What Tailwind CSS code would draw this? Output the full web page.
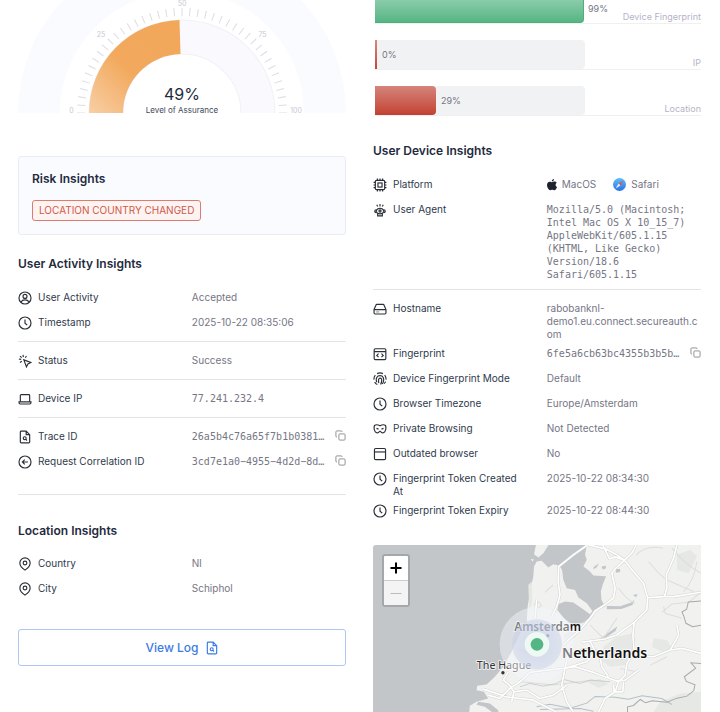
<!DOCTYPE html>
<html lang="en">
<head>
<meta charset="utf-8">
<meta name="viewport" content="width=device-width, initial-scale=1">
<title>Assurance Insights</title>
<script src="https://cdn.jsdelivr.net/npm/@tailwindcss/browser@4"></script>
</head>
<body class="bg-white font-['Inter',sans-serif] text-[10px] leading-[13px] text-[#2f3a4c]">
<svg class="hidden" aria-hidden="true">
  <defs>
    <symbol id="i-user" viewBox="0 0 24 24"><circle cx="12" cy="12" r="10.3"/><circle cx="12" cy="9.3" r="3.4"/><path d="M5.2 19c1.3-2.700 3.900-3.700 6.800-3.700s5.500 1 6.800 3.700"/></symbol>
    <symbol id="i-clock" viewBox="0 0 24 24"><circle cx="12" cy="12" r="10.300"/><path d="M12 6v6.300l3.800 3.400"/></symbol>
    <symbol id="i-click" viewBox="0 0 24 24"><path d="M10 10l12 4.500-5 2.500-2.500 5z"/><path d="M8.500 1.500l.8 4M1.500 8.500l4 .8M3.500 3.500l2.800 2.800M14.500 3.500l-2 3M3.500 14.500l3-2"/></symbol>
    <symbol id="i-laptop" viewBox="0 0 24 24"><path d="M4 16V6a1.500 1.500 0 0 1 1.500-1.500h13A1.500 1.500 0 0 1 20 6v10M1.800 17h20.400v1.500a2 2 0 0 1-2 2H3.800a2 2 0 0 1-2-2z"/></symbol>
    <symbol id="i-file" viewBox="0 0 24 24"><path d="M14 2H5.500A1.500 1.500 0 0 0 4 3.500v17A1.500 1.500 0 0 0 5.500 22h13a1.500 1.500 0 0 0 1.500-1.500V8zM14 2v6h6"/><circle cx="11.500" cy="14" r="2.500"/><path d="M13.500 16l2 2"/></symbol>
    <symbol id="i-back" viewBox="0 0 24 24"><circle cx="12" cy="12" r="10.300"/><path d="M17 12H7.500M11.500 8l-4 4 4 4"/></symbol>
    <symbol id="i-pin" viewBox="0 0 24 24"><path d="M12 22.500c-3-2-8.800-6.800-8.800-12.300a8.800 8.800 0 0 1 17.600 0c0 5.500-5.800 10.300-8.800 12.300z"/><circle cx="12" cy="10.200" r="3.200"/></symbol>
    <symbol id="i-copy" viewBox="0 0 24 24"><rect x="8.500" y="8.500" width="13.500" height="13.500" rx="2"/><path d="M4.500 15.500H4a2 2 0 0 1-2-2V4a2 2 0 0 1 2-2h9.500a2 2 0 0 1 2 2v.5"/></symbol>
    <symbol id="i-chip" viewBox="0 0 24 24"><rect x="4" y="4" width="16" height="16" rx="2"/><rect x="8.500" y="8.500" width="7" height="7"/><path d="M7.500 1v3M12 1v3M16.500 1v3M7.500 20v3M12 20v3M16.500 20v3M1 7.500h3M1 12h3M1 16.500h3M20 7.500h3M20 12h3M20 16.500h3"/></symbol>
    <symbol id="i-agent" viewBox="0 0 24 24"><path d="M5 14c1.500-3.500 4-5 7-5s5.500 1.500 7 5c-1.500 3-4 4.500-7 4.500S6.500 17 5 14z"/><circle cx="12" cy="13.700" r="1.800"/><path d="M5.500 11.500c-2 0-2.500 1-2.500 2.500s.5 2.500 2.500 2.500M18.500 11.500c2 0 2.500 1 2.500 2.500s-.5 2.500-2.500 2.500M8 18v4h8v-4M12 1.500V6M6.500 3L8 6M17.500 3L16 6"/></symbol>
    <symbol id="i-drive" viewBox="0 0 24 24"><path d="M1.800 13L5 5.500A2 2 0 0 1 6.800 4h10.400A2 2 0 0 1 19 5.500l3.200 7.500v5.500a2 2 0 0 1-2 2H3.800a2 2 0 0 1-2-2zM1.800 13h20.400"/><path d="M5.500 17h5" stroke-opacity=".5"/></symbol>
    <symbol id="i-code" viewBox="0 0 24 24"><rect x="2" y="3" width="20" height="18.500" rx="2"/><path d="M2 8h20M9.500 11.500l-3 3 3 3M14.500 11.500l3 3-3 3"/></symbol>
    <symbol id="i-finger" viewBox="0 0 24 24"><path d="M7 2.800a10.300 10.300 0 0 1 10 0M20 5.500A10.300 10.300 0 0 1 22.300 13M21.500 16.500a10.500 10.500 0 0 1-2.500 3.500M4 5.500A10.300 10.300 0 0 0 1.700 13M2.800 17a10.300 10.300 0 0 0 4.700 4.500M6.500 17.500C5.500 15 5 12 6.500 9.300c2.200-4.100 8.800-4.100 11 0 1.300 3 .8 7.500-1.500 11.200M10 19c-.5-2-.7-4.500-.3-6.500.6-2.500 4.700-2.500 5.100 0 .3 3-.3 6-1.800 9"/></symbol>
    <symbol id="i-mask" viewBox="0 0 24 24"><path d="M2.500 6C5 4 8.500 4.500 12 6.500 15.500 4.500 19 4 21.500 6c1 3.500.6 8-1.500 11-2 2.300-4.500 1.800-6 .3l-2-1.500-2 1.500c-1.500 1.500-4 2-6-.3C1.900 14 1.500 9.500 2.500 6z"/><path d="M6 11l3.500 1.200M18 11l-3.500 1.200"/></symbol>
    <symbol id="i-window" viewBox="0 0 24 24"><rect x="2.500" y="2.500" width="19" height="19" rx="2"/><path d="M2.500 8.500h19"/></symbol>
  </defs>
</svg>

<main class="grid grid-cols-2 gap-[27px] pl-[18px] pr-[19px]">
  <div class="min-w-0">
    <svg class="block w-full" viewBox="0 0 328 114" role="img" aria-label="Level of Assurance 49%">
      <defs>
        <linearGradient id="g-orange" x1="0" y1="1" x2="1" y2="0"><stop offset="0" stop-color="#f8cfa5"/><stop offset=".45" stop-color="#f2a95d"/><stop offset="1" stop-color="#f2a75a"/></linearGradient>
        <clipPath id="g-clip"><rect width="328" height="113"/></clipPath>
      </defs>
      <g clip-path="url(#g-clip)">
        <circle cx="164" cy="113" r="143" fill="none" stroke="#fafbfe" stroke-width="42"/>
        <circle cx="164" cy="113" r="76" fill="none" stroke="#f0f0f8" stroke-width="35"/>
        <circle cx="164" cy="113" r="76" fill="none" stroke="#f9f9fe" stroke-width="33"/>
      </g>
      <path d="M63 113a101 101 0 0 1 202 0" pathLength="40" fill="none" stroke="#dddde5" stroke-width="8" stroke-dasharray=".13 .87" stroke-dashoffset=".065"/>
      <path d="M71 113A93 93 0 0 1 161.500 20L162.500 54A59 59 0 0 0 105 113z" fill="url(#g-orange)"/>
      <g font-family="Inter, sans-serif" font-size="7" fill="#c8c8d2" text-anchor="middle">
        <text x="53.500" y="113">0</text><text x="83" y="37">25</text><text x="164" y="6">50</text><text x="244.500" y="37">75</text><text x="278" y="113">100</text>
      </g>
      <text x="164" y="100" text-anchor="middle" font-family="Inter, sans-serif" font-size="16" fill="#1f2b3e">49%</text>
      <text x="164" y="113" text-anchor="middle" font-family="Inter, sans-serif" font-size="8" fill="#3d4859">Level of Assurance</text>
    </svg>

    <section class="mt-[42px] rounded-[3px] border border-[#e9edf3] bg-[#fafbfe] px-[13px] pt-[14px] pb-[13px]">
      <h2 class="text-[12px] leading-[16px] font-semibold text-[#1f2b3e]">Risk Insights</h2>
      <p class="mt-[13px] flex"><span class="rounded-[3px] border border-[#dc7b72] bg-[#fdf4f2] px-[6px] leading-[19px] text-[#d0574c]">LOCATION COUNTRY CHANGED</span></p>
    </section>

    <h2 class="mt-[21px] text-[12px] leading-[16px] font-semibold text-[#1f2b3e]">User Activity Insights</h2>
    <dl class="mt-[13px]">
      <div class="grid min-h-[25px] grid-cols-[53%_47%] pt-[6px]"><dt class="flex gap-[6px] pr-[24px]"><svg class="size-[14px] shrink-0 fill-none stroke-[#2b2f36] stroke-[2]"><use href="#i-user"/></svg>User Activity</dt><dd class="text-[#767685]">Accepted</dd></div>
      <div class="grid min-h-[25px] grid-cols-[53%_47%] pt-[6px]"><dt class="flex gap-[6px] pr-[24px]"><svg class="size-[14px] shrink-0 fill-none stroke-[#2b2f36] stroke-[2]"><use href="#i-clock"/></svg>Timestamp</dt><dd class="text-[#767685]">2025-10-22 08:35:06</dd></div>
    </dl>
    <hr class="my-[6px] border-[#e4e4e8]">
    <dl>
      <div class="grid min-h-[25px] grid-cols-[53%_47%] pt-[6px]"><dt class="flex gap-[6px] pr-[24px]"><svg class="size-[14px] shrink-0 fill-none stroke-[#2b2f36] stroke-[2]"><use href="#i-click"/></svg>Status</dt><dd class="text-[#767685]">Success</dd></div>
    </dl>
    <hr class="my-[6px] border-[#e4e4e8]">
    <dl>
      <div class="grid min-h-[25px] grid-cols-[53%_47%] pt-[6px]"><dt class="flex gap-[6px] pr-[24px]"><svg class="size-[14px] shrink-0 fill-none stroke-[#2b2f36] stroke-[2]"><use href="#i-laptop"/></svg>Device IP</dt><dd class="font-['DejaVu_Sans_Mono',monospace] text-[#767685]">77.241.232.4</dd></div>
    </dl>
    <hr class="my-[6px] border-[#e4e4e8]">
    <dl>
      <div class="grid min-h-[25px] grid-cols-[53%_47%] pt-[6px]"><dt class="flex gap-[6px] pr-[24px]"><svg class="size-[14px] shrink-0 fill-none stroke-[#2b2f36] stroke-[2]"><use href="#i-file"/></svg>Trace ID</dt><dd class="flex min-w-0 justify-between text-[#767685]"><span class="font-['DejaVu_Sans_Mono',monospace]">26a5b4c76a65f7b1b0381…</span><button type="button" aria-label="Copy Trace ID" class="size-[11px] shrink-0"><svg class="block size-[11px] fill-none stroke-[#8b8b93] stroke-[2]"><use href="#i-copy"/></svg></button></dd></div>
      <div class="grid min-h-[25px] grid-cols-[53%_47%] pt-[6px]"><dt class="flex gap-[6px] pr-[24px]"><svg class="size-[14px] shrink-0 fill-none stroke-[#2b2f36] stroke-[2]"><use href="#i-back"/></svg>Request Correlation ID</dt><dd class="flex min-w-0 justify-between text-[#767685]"><span class="font-['DejaVu_Sans_Mono',monospace]">3cd7e1a0−4955−4d2d−8d…</span><button type="button" aria-label="Copy Request Correlation ID" class="size-[11px] shrink-0"><svg class="block size-[11px] fill-none stroke-[#8b8b93] stroke-[2]"><use href="#i-copy"/></svg></button></dd></div>
    </dl>
    <hr class="mt-[20px] border-[#e4e4e8]">

    <h2 class="mt-[28px] text-[12px] leading-[16px] font-semibold text-[#1f2b3e]">Location Insights</h2>
    <dl class="mt-[12px]">
      <div class="grid min-h-[25px] grid-cols-[53%_47%] pt-[6px]"><dt class="flex gap-[6px] pr-[24px]"><svg class="size-[14px] shrink-0 fill-none stroke-[#2b2f36] stroke-[2]"><use href="#i-pin"/></svg>Country</dt><dd class="text-[#767685]">Nl</dd></div>
      <div class="grid min-h-[25px] grid-cols-[53%_47%] pt-[6px]"><dt class="flex gap-[6px] pr-[24px]"><svg class="size-[14px] shrink-0 fill-none stroke-[#2b2f36] stroke-[2]"><use href="#i-pin"/></svg>City</dt><dd class="text-[#767685]">Schiphol</dd></div>
    </dl>
    <button type="button" class="mt-[28px] flex h-[37px] w-full items-center justify-center gap-[6px] rounded-[3px] border border-[#adc6f5] text-[12px] leading-[16px] font-medium text-[#3b7be6]">View Log<svg class="size-[14px] fill-none stroke-current stroke-[2]"><use href="#i-file"/></svg></button>
  </div>

  <div class="min-w-0">
    <div class="flex flex-col gap-[16px] pl-[2px] text-[9px] leading-[13px]">
      <div class="flex h-[24px] border-b border-[#f0f0f3]">
        <div class="flex w-[210px] shrink-0 bg-white"><div class="rounded-br-[4px] border-r border-b border-[#4caf7d] bg-linear-to-b from-[#8accaa] to-[#55b584]" style="width:99.3%"></div></div>
        <span class="mt-[2px] ml-[3px] text-[#767685]">99%</span>
        <span class="ml-auto self-end text-[#b4b4c6]">Device Fingerprint</span>
      </div>
      <div class="flex h-[30px] border-b border-[#f0f0f3]">
        <div class="flex w-[210px] shrink-0 items-stretch rounded-r-[4px] bg-[#f1f2f4]"><div class="w-[2px] bg-linear-to-b from-[#d68880] to-[#c44436]"></div><span class="ml-[5px] self-center text-[#767685]">0%</span></div>
        <span class="ml-auto self-end text-[#b4b4c6]">IP</span>
      </div>
      <div class="flex h-[30px] border-b border-[#f0f0f3]">
        <div class="flex w-[210px] shrink-0 items-stretch rounded-r-[4px] bg-[#f1f2f4]"><div class="rounded-r-[4px] bg-linear-to-b from-[#d4847c] to-[#c23f31]" style="width:29%"></div><span class="ml-[5px] self-center text-[#767685]">29%</span></div>
        <span class="ml-auto self-end text-[#b4b4c6]">Location</span>
      </div>
    </div>

    <h2 class="mt-[27px] text-[12px] leading-[16px] font-semibold text-[#1f2b3e]">User Device Insights</h2>
    <dl class="mt-[13px]">
      <div class="grid min-h-[25px] grid-cols-[53%_47%] pt-[6px]"><dt class="flex gap-[6px] pr-[24px]"><svg class="size-[14px] shrink-0 fill-none stroke-[#2b2f36] stroke-[2]"><use href="#i-chip"/></svg>Platform</dt>
        <dd class="flex gap-[17px] text-[#767685]">
          <span class="flex gap-[5px]"><svg class="h-[13px] w-[10px]" viewBox="0 0 20 26"><path fill="#1d222c" d="M14 2c.2 2.500-2 5-4.400 5C9.400 4.500 11.600 2.300 14 2zM19.500 9.300c-3.500 2.200-3 7 .5 8.700-1 3.200-3 6.500-5.500 6.500-1.500 0-2.200-1-4-1s-2.600 1-4 1C3.500 24.500 0 18.500 0 14c0-4.300 2.800-6.700 5.700-6.700 1.800 0 3.300 1.200 4.500 1.200 1.100 0 2.800-1.300 5-1.300 1.700 0 3.300.8 4.300 2.100z"/></svg>MacOS</span>
          <span class="flex gap-[5px]"><svg class="size-[13px]" viewBox="0 0 26 26"><defs><linearGradient id="s-blue" x2="0" y2="1"><stop stop-color="#5cc0f8"/><stop offset="1" stop-color="#2f6fe8"/></linearGradient></defs><circle cx="13" cy="13" r="13" fill="url(#s-blue)"/><path fill="#e8554f" d="M21 5l-6.200 9.800-3.600-3.600z"/><path fill="#e9f1fb" d="M5 21l6.200-9.800 3.600 3.600z"/></svg>Safari</span>
        </dd></div>
      <div class="grid min-h-[25px] grid-cols-[53%_47%] pt-[6px] pb-[2px]"><dt class="flex gap-[6px] pr-[24px]"><svg class="size-[14px] shrink-0 fill-none stroke-[#2b2f36] stroke-[2]"><use href="#i-agent"/></svg>User Agent</dt><dd class="font-['DejaVu_Sans_Mono',monospace] text-[#767685]">Mozilla/5.0 (Macintosh; Intel Mac OS X 10_15_7) AppleWebKit/605.1.15 (KHTML, Like Gecko) Version/18.6 Safari/605.1.15</dd></div>
    </dl>
    <hr class="my-[6px] border-[#e4e4e8]">
    <dl>
      <div class="grid min-h-[25px] grid-cols-[53%_47%] pt-[6px]"><dt class="flex gap-[6px] pr-[24px]"><svg class="size-[14px] shrink-0 fill-none stroke-[#2b2f36] stroke-[2]"><use href="#i-drive"/></svg>Hostname</dt><dd class="wrap-anywhere text-[#767685]">rabobanknl-demo1.eu.connect.secureauth.com</dd></div>
      <div class="grid min-h-[25px] grid-cols-[53%_47%] pt-[6px]"><dt class="flex gap-[6px] pr-[24px]"><svg class="size-[14px] shrink-0 fill-none stroke-[#2b2f36] stroke-[2]"><use href="#i-code"/></svg>Fingerprint</dt><dd class="flex min-w-0 justify-between text-[#767685]"><span class="font-['DejaVu_Sans_Mono',monospace]">6fe5a6cb63bc4355b3b5b…</span><button type="button" aria-label="Copy Fingerprint" class="size-[11px] shrink-0"><svg class="block size-[11px] fill-none stroke-[#8b8b93] stroke-[2]"><use href="#i-copy"/></svg></button></dd></div>
      <div class="grid min-h-[25px] grid-cols-[53%_47%] pt-[6px]"><dt class="flex gap-[6px] pr-[24px]"><svg class="size-[14px] shrink-0 fill-none stroke-[#2b2f36] stroke-[2]"><use href="#i-finger"/></svg>Device Fingerprint Mode</dt><dd class="text-[#767685]">Default</dd></div>
      <div class="grid min-h-[25px] grid-cols-[53%_47%] pt-[6px]"><dt class="flex gap-[6px] pr-[24px]"><svg class="size-[14px] shrink-0 fill-none stroke-[#2b2f36] stroke-[2]"><use href="#i-clock"/></svg>Browser Timezone</dt><dd class="text-[#767685]">Europe/Amsterdam</dd></div>
      <div class="grid min-h-[25px] grid-cols-[53%_47%] pt-[6px]"><dt class="flex gap-[6px] pr-[24px]"><svg class="size-[14px] shrink-0 fill-none stroke-[#2b2f36] stroke-[2]"><use href="#i-mask"/></svg>Private Browsing</dt><dd class="text-[#767685]">Not Detected</dd></div>
      <div class="grid min-h-[25px] grid-cols-[53%_47%] pt-[6px]"><dt class="flex gap-[6px] pr-[24px]"><svg class="size-[14px] shrink-0 fill-none stroke-[#2b2f36] stroke-[2]"><use href="#i-window"/></svg>Outdated browser</dt><dd class="text-[#767685]">No</dd></div>
      <div class="grid min-h-[25px] grid-cols-[53%_47%] pt-[6px]"><dt class="flex gap-[6px] pr-[24px]"><svg class="size-[14px] shrink-0 fill-none stroke-[#2b2f36] stroke-[2]"><use href="#i-clock"/></svg>Fingerprint Token Created At</dt><dd class="text-[#767685]">2025-10-22 08:34:30</dd></div>
      <div class="grid min-h-[25px] grid-cols-[53%_47%] pt-[6px]"><dt class="flex gap-[6px] pr-[24px]"><svg class="size-[14px] shrink-0 fill-none stroke-[#2b2f36] stroke-[2]"><use href="#i-clock"/></svg>Fingerprint Token Expiry</dt><dd class="text-[#767685]">2025-10-22 08:44:30</dd></div>
    </dl>

    <section aria-label="Map" class="relative mt-[22px] h-[167px] overflow-hidden rounded-t-[3px] bg-[#c2c6c9]">
      <svg class="block size-full" viewBox="40 30 982 501" preserveAspectRatio="xMidYMid slice">
        <defs>
          <radialGradient id="m-halo"><stop offset=".3" stop-color="#b8c4e4"/><stop offset="1" stop-color="#c9d1e8"/></radialGradient>
          <path id="roads" d="M680 32L640 60 596 95 594 140 600 180 590 215 575 245M685 30L735 42 770 60 793 76 818 108 850 145 862 188 860 225 822 262 790 285 770 300 735 312 690 318 665 322M793 76L815 55 828 30M793 76L765 66 748 72 735 45 728 30M793 76L765 102 755 115 765 160 760 190 730 212 705 228 690 250 655 290 630 310 610 330M822 262L818 300 822 350 800 385 795 420 775 440M862 188L912 185 940 185 1022 172M912 185L920 160 918 120 940 70 950 30M640 330L625 350 615 400 605 450 620 500 640 531M610 400L645 395 700 412 770 438 795 435 835 405M610 400L560 405 510 412 480 440 450 460 420 490 385 480M530 195L525 250M445 410L430 435 448 450 462 470 455 500M462 470L500 465 540 490 580 480 620 450M820 365L880 365 930 345 965 340 1022 355M690 318L705 350 680 380 615 400M720 365L725 395 745 425M775 440L765 470 735 490 715 531M790 440L788 470 762 470 760 445M370 462L440 485 520 495 590 531M930 345L955 300 950 270"/>
        </defs>
        <path fill="#f1f1f0" d="M680 30L675 60 680 75 670 95 688 108 700 122 738 124 728 148 722 170 724 195 735 215 712 222 690 245 672 262 640 272 612 250 592 225 594 208 615 200 640 203 668 222 690 238 697 228 680 205 655 188 645 165 620 160 610 135 606 105 598 92 580 88 565 98 545 78 530 80 522 95 520 125 512 160 503 215 500 260 478 300 455 350 430 395 405 425 380 448 352 452 350 465 372 470 385 490 350 500 330 512 328 531H1022V30z"/>
        <path fill="#f1f1f0" d="M528 30H566L550 55 535 68 522 58zM512 72l10 2-4 6z"/>
        <path fill="#c2c6c9" d="M355 500l35 5 25 20v6h-18l-22-16-25-6zM740 213l40 1 35-12 8-8-6 16-34 12-43 1zM714 314l18-12 40-28-6 14-30 20zM700 97l16-12-6 12-10 6zM724 96l12-4 2 8-10 4zM765 102l14 0 2 8-12 4zM818 180l14-3-4 10z"/>
        <g fill="#e6e8e6"><path d="M730 335l40-30 50-10 5 50-25 45-50 5-30-20zM880 310l40 5 15 25-30 10-30-15zM900 500l60-25 62-5v61H880zM950 60l40-15 20 20-25 50-35-10zM505 150l10-10 2 60-9 30zM610 300l25-12 10 20-25 12zM680 440l40-8 25 15-30 12z"/></g>
        <g fill="none" stroke="#dcdddd" stroke-width="3">
          <path d="M555 172l24-22M522 210q8-16 18-5t-10 14M865 80q40 50 65 60t80 35M935 40q40 50 87 75M1010 80q-10 60-40 90M828 60q30-30 80-20M905 232l30-25 50-5 37-30M910 215l5 20 50 15M775 160q30 40 50 45M690 270l40 40 40-60M780 400l50 10M870 390l50-25M470 340l60 25M480 440l100 10 120-15M645 350q40-20 75 0"/>
        </g>
        <g fill="none" stroke="#bcbec0" stroke-width="2"><path d="M480 455l30-10 40 8 40-8 20-12 50 12 30-10 60 5"/></g>
        <g fill="none" stroke="#b3c0c6" stroke-width="3"><path d="M530 515l40-8 60 12 50-15 25-20 60 2 40 6 40-10 60 8 30 18M540 523l120-3 40 8"/></g>
        <g fill="none" stroke="#a7a9ab" stroke-width="3"><path d="M1022 198l-38 3-5 22-14 8 6 14 6 20 20 10 25-4M1022 385l-30-2 14 16-34 26 6 14 26 10-4 18-20 16-30 6-30 12-44-4-20 6-16-10-20 18-18 4 0 26"/></g>
        <use href="#roads" fill="none" stroke="#d2d3d4" stroke-width="8" stroke-linejoin="round"/>
        <use href="#roads" fill="none" stroke="#fff" stroke-width="5" stroke-linejoin="round"/>
        <circle cx="429" cy="413" r="5" fill="#333"/><circle cx="563" cy="302" r="5" fill="#555"/>
        <g font-family="'Noto Sans', sans-serif" stroke="#fff" stroke-opacity=".7" stroke-width="6" paint-order="stroke" stroke-linejoin="round">
          <text x="463" y="289" font-size="35" font-weight="600" fill="#111">Amsterdam</text>
          <text x="606" y="368" font-size="42" font-weight="600" fill="#111">Netherlands</text>
          <text x="351" y="402" font-size="32" fill="#333">The Hague</text>
        </g>
        <circle cx="531" cy="328" r="112" fill="#f3f4f8" fill-opacity=".48"/>
        <circle cx="531" cy="328" r="75" fill="url(#m-halo)" fill-opacity=".5"/>
        <circle cx="531" cy="328" r="37" fill="#edf9f2"/>
        <circle cx="531" cy="328" r="19" fill="#54b684"/>
      </svg>
      <div class="absolute top-[9px] left-[9px] flex w-[28px] flex-col overflow-hidden rounded-[3px] border-2 border-[#a4a8aa] bg-white">
        <button type="button" aria-label="Zoom in" class="flex h-[25px] items-center justify-center border-b border-[#ccc]"><svg class="size-[12px] stroke-black stroke-[2]" viewBox="0 0 12 12"><path d="M6 .5v11M.5 6h11"/></svg></button>
        <button type="button" aria-label="Zoom out" disabled class="flex h-[24px] items-center justify-center bg-[#f4f4f4]"><svg class="size-[12px] stroke-[#bbb] stroke-[1]" viewBox="0 0 12 12"><path d="M.5 6.500h11"/></svg></button>
      </div>
    </section>
  </div>
</main>
</body>
</html>
